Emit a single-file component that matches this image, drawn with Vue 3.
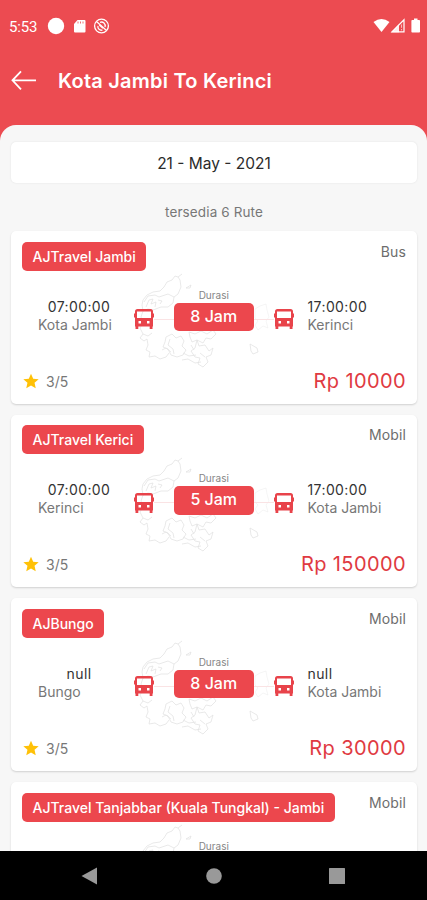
<template>
  <div class="screen">
    <!-- Status bar -->
    <div class="status-bar">
      <span class="clock">5:53</span>
      <svg class="status-left" width="64" height="18" viewBox="0 0 64 18">
        <circle cx="9" cy="9" r="8.2" fill="#fff" />
        <path d="M30.5 3H37.5Q38.5 3 38.5 4V14.5Q38.5 15.5 37.5 15.5H28Q27 15.5 27 14.5V7Z" fill="#fff" />
        <path d="M31 4.5V6.5M33.5 4.5V6.5M36 4.5V6.5" stroke="#EC4B51" stroke-width="0.8" />
        <circle cx="54.5" cy="9" r="6.9" fill="none" stroke="#fff" stroke-width="1.3" />
        <path d="M49.5 4.5L59.5 13.5M51 9A3.4 3.4 0 0 0 55.5 13M53 5.3A3.8 3.8 0 0 1 58 10M52.3 8L56 11.3" fill="none" stroke="#fff" stroke-width="1.3" />
      </svg>
      <svg class="status-right" width="48" height="18" viewBox="0 0 48 18">
        <path d="M0.5 5Q8.5 -1 16.5 5L8.5 15Z" fill="#fff" />
        <path d="M18 15.3L26 7.3V15.3Z" fill="#fff" fill-opacity="0.9" />
        <path d="M19 14.8L31 2.8V14.8Z" fill="none" stroke="#fff" stroke-width="1.2" />
        <path d="M28.5 7.5V10.8M28.5 12V13.4" stroke="#fff" stroke-width="1" opacity="0.6" />
        <path d="M41 1.5H44.5V3H46.2Q47 3 47 3.8V14.7Q47 15.5 46.2 15.5H39.2Q38.4 15.5 38.4 14.7V3.8Q38.4 3 39.2 3H41Z" fill="#fff" />
      </svg>
    </div>

    <!-- Header -->
    <header class="header">
      <svg width="26" height="22" viewBox="0 0 26 22">
        <path d="M25 11.3H1.5M10 2.3L1.5 11.3L10 20.3" fill="none" stroke="#fff" stroke-width="1.8" />
      </svg>
      <h1 class="title">Kota Jambi To Kerinci</h1>
    </header>

    <main class="sheet">
      <div class="date-box"><span>21 - May - 2021</span></div>
      <p class="available">tersedia 6 Rute</p>

      <article v-for="route in routes" :key="route.agent" class="card">
        <svg class="map" width="134" height="98" viewBox="0 0 134 98">
          <g fill="none" stroke="#e3e3e3" stroke-width="0.8" stroke-linejoin="round">
            <path d="M44 1L40 4L37 3L34 7L29 9L26 14L22 18L15 19L9 22L5 27L4 32L5 38L10 36L15 37L23 34L30 34L35 30L36 24L40 21L43 14L42 7L40 4" />
            <path d="M6 29L10 23L17 22L21 24L30 21L36 24M8 34L11 27L15 26L13 31L18 29L17 34M20 27L24 28L22 31" />
            <path d="M48 15L53 12L52 15Z" />
            <path d="M5 38L3 44L5 50L2 55L5 61L2 65L6 68L9 66L10 72L8 77L12 79L11 84L17 83L22 86L28 84L31 80" />
            <path d="M5 61L10 63L14 60M28 64L34 61L38 65L43 63L46 68L44 73L48 77L45 82L39 84L33 82L30 76L25 74L27 69ZM32 66L30 72L35 76L36 81M24 77L28 75L33 79" />
            <path d="M51 59L57 61L63 58L69 61L75 57L78 61L73 66L68 65L65 70L59 67L54 69L52 64ZM59 67L61 73L67 72L71 78L75 75L73 82L68 84L70 89L65 94L60 91L62 85L57 84L53 78L57 75Z" />
            <path d="M45 80L51 83L58 82M44 87L50 86L57 90L63 89M53 72L56 77M67 84L62 80" />
            <path d="M112 71L119 75L120 79L115 81L113 78Z" />
            <path d="M117 36L122 33L128 31L129 37L131 44L128 48L130 55L125 53L120 57L117 52L120 48L117 45Z" opacity="0.45" />
          </g>
        </svg>

        <div class="card-head">
          <span class="agent">{{ route.agent }}</span>
          <span class="vehicle">{{ route.vehicle }}</span>
        </div>

        <div class="journey">
          <div class="origin">
            <span class="time">{{ route.depart }}</span>
            <span class="place">{{ route.from }}</span>
          </div>
          <svg class="bus" width="20" height="20" viewBox="0 0 20 20">
            <path :d="busPath" fill="#E8434A" fill-rule="evenodd" />
          </svg>
          <i class="line"></i>
          <div class="duration">
            <span class="duration-label">Durasi</span>
            <span class="duration-value">{{ route.hours }} Jam</span>
          </div>
          <i class="line"></i>
          <svg class="bus" width="20" height="20" viewBox="0 0 20 20">
            <path :d="busPath" fill="#E8434A" fill-rule="evenodd" />
          </svg>
          <div class="destination">
            <span class="time">{{ route.arrive }}</span>
            <span class="place">{{ route.to }}</span>
          </div>
        </div>

        <div class="card-foot">
          <svg width="16" height="16" viewBox="0 0 24 24">
            <path d="M12 1L15.3 8.5L23.5 9.3L17.3 14.7L19.1 22.8L12 18.6L4.9 22.8L6.7 14.7L0.5 9.3L8.7 8.5Z" fill="#FFC107" />
          </svg>
          <span class="rating">3/5</span>
          <span class="price">Rp {{ route.price }}</span>
        </div>
      </article>
    </main>

    <!-- System navigation -->
    <nav class="nav-bar">
      <svg width="18" height="18" viewBox="0 0 18 18"><path d="M16 0.5V17.5L0.5 9Z" fill="#999" /></svg>
      <svg width="18" height="18" viewBox="0 0 18 18"><circle cx="9" cy="9" r="7.8" fill="#999" /></svg>
      <svg width="18" height="18" viewBox="0 0 18 18"><rect x="1" y="1" width="16" height="16" rx="0.5" fill="#999" /></svg>
    </nav>
  </div>
</template>

<script setup>
import { ref } from 'vue'

// Front view of a bus: body, mirrors, windscreen and headlights
const busPath = 'M3.5 0H16.5Q19 0 19 2.5V4.5H20V8.5H19V17.5H18.5V20H15.7V17.5H4.3V20H1.5V17.5H1V8.5H0V4.5H1V2.5Q1 0 3.5 0ZM3 2.5V9H17V2.5ZM4.5 12V14.5H7V12ZM13 12V14.5H15.5V12Z'

const routes = ref([
  { agent: 'AJTravel Jambi', vehicle: 'Bus', depart: '07:00:00', arrive: '17:00:00', from: 'Kota Jambi', to: 'Kerinci', hours: 8, price: 10000 },
  { agent: 'AJTravel Kerici', vehicle: 'Mobil', depart: '07:00:00', arrive: '17:00:00', from: 'Kerinci', to: 'Kota Jambi', hours: 5, price: 150000 },
  { agent: 'AJBungo', vehicle: 'Mobil', depart: 'null', arrive: 'null', from: 'Bungo', to: 'Kota Jambi', hours: 8, price: 30000 },
  { agent: 'AJTravel Tanjabbar (Kuala Tungkal) - Jambi', vehicle: 'Mobil' }
])
</script>

<style>
body {
  margin: 0;
}
</style>

<style scoped>
.screen {
  width: 427px;
  height: 900px;
  display: flex;
  flex-direction: column;
  overflow: hidden;
  background: #EC4B51;
  font-family: Inter, "Liberation Sans", sans-serif;
  box-sizing: border-box;
}

.status-bar {
  flex: none;
  height: 52px;
  display: flex;
  align-items: center;
  padding: 0 6px 0 9px;
  box-sizing: border-box;
  color: #fff;
}

.clock {
  width: 38px;
  padding-top: 1px;
  font-family: Roboto, sans-serif;
  font-size: 15px;
  letter-spacing: -0.2px;
}

.status-right {
  margin-left: auto;
}

.header {
  flex: none;
  height: 73px;
  display: flex;
  align-items: flex-start;
  gap: 21px;
  padding: 17px 11px 0;
  box-sizing: border-box;
}

.title {
  margin: 0;
  color: #fff;
  font-size: 20px;
  font-weight: 600;
  line-height: 25px;
  letter-spacing: 0.22px;
}

.sheet {
  flex: 1;
  min-height: 0;
  overflow: hidden;
  padding: 17px 10px 0 11px;
  background: #f7f7f7;
  border-radius: 16px 16px 0 0;
}

.date-box {
  height: 41px;
  border-radius: 5px;
  background: #fff;
  box-shadow: 0 0 2px rgba(0, 0, 0, 0.1);
  color: #2b2b2b;
  font-size: 15.5px;
  line-height: 43px;
  text-align: center;
}

.available {
  margin: 19px 0 8px;
  color: #777;
  font-size: 13.5px;
  line-height: 21px;
  letter-spacing: 0.12px;
  text-align: center;
}

.card {
  position: relative;
  height: 172.7px;
  margin-bottom: 11px;
  padding: 10.5px 11px 0;
  box-sizing: border-box;
  border-radius: 5px;
  background: #fff;
  box-shadow: 0 1px 2px rgba(0, 0, 0, 0.16);
}

.map {
  position: absolute;
  top: 42px;
  left: 127px;
}

.card-head,
.journey,
.card-foot {
  position: relative;
  display: flex;
}

.card-head {
  justify-content: space-between;
}

.agent {
  height: 29px;
  padding: 0 10.5px;
  border-radius: 5px;
  background: #EC474D;
  color: #fff;
  font-size: 14px;
  font-weight: 500;
  line-height: 30px;
  white-space: nowrap;
}

.vehicle {
  color: #6d6d6d;
  font-size: 14px;
  line-height: 19px;
  letter-spacing: 0.1px;
}

.journey {
  height: 88px;
  padding: 17px 0 0 16px;
  box-sizing: border-box;
}

.origin,
.destination {
  display: flex;
  flex-direction: column;
  padding-top: 10px;
  white-space: nowrap;
}

.origin {
  width: 82px;
}

.origin .time {
  text-align: center;
}

.time {
  color: #333;
  font-size: 14px;
  line-height: 18px;
  letter-spacing: 0.4px;
}

.place {
  color: #777;
  font-size: 14px;
  line-height: 17px;
}

.bus {
  flex: none;
  margin-top: 21.5px;
}

.origin + .bus {
  margin-left: 13.5px;
}

.line {
  width: 20.5px;
  height: 1px;
  margin-top: 31px;
  background: #fae3e4;
}

.duration {
  width: 79.5px;
  display: flex;
  flex-direction: column;
  text-align: center;
}

.duration-label {
  color: #858585;
  font-size: 10px;
  line-height: 14px;
}

.duration-value {
  height: 28.5px;
  margin-top: 1px;
  border-radius: 5px;
  background: #EC474D;
  color: #fff;
  font-size: 16px;
  font-weight: 500;
  line-height: 27px;
}

.destination {
  margin-left: 13.5px;
}

.card-foot {
  align-items: center;
  height: 44px;
  padding-left: 1px;
}

.rating {
  margin-left: 7px;
  padding-top: 1px;
  color: #777;
  font-size: 14px;
}

.price {
  margin-left: auto;
  color: #E03A42;
  font-size: 20px;
  line-height: 24px;
  letter-spacing: 0.4px;
}

.nav-bar {
  flex: none;
  height: 49px;
  display: flex;
  justify-content: space-between;
  align-items: center;
  padding: 0 81px;
  background: #000;
}
</style>
